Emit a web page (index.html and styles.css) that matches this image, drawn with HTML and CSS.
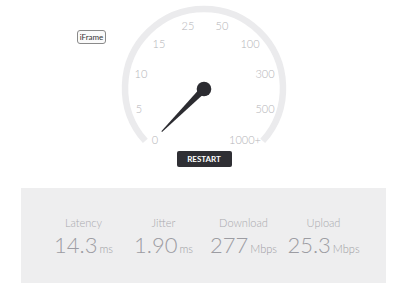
FILE: index.html
```
<!DOCTYPE html>
<html>
<head>
<meta charset="utf-8">
<link rel="stylesheet" href="styles.css">
</head>
<body>
<div class="top">
  <button class="iframe-btn">iFrame</button>
  <div class="gauge-wrap">
    <svg class="gauge" width="180" height="150" viewBox="0 0 180 150">
      <path class="arc" d="M31.3 140.9 A79 79 0 1 1 148.7 140.9"/>
      <g class="ticks">
        <text x="41" y="139">0</text>
        <text x="25" y="108">5</text>
        <text x="27" y="73">10</text>
        <text x="45" y="43">15</text>
        <text x="74" y="25">25</text>
        <text x="108" y="25">50</text>
        <text x="136" y="43">100</text>
        <text x="151" y="73">300</text>
        <text x="151" y="108">500</text>
        <text x="131" y="139">1000+</text>
      </g>
      <polygon class="needle" points="87.6,86.6 92.4,91.4 48.05,132.05 47.35,131.35"/>
      <circle class="needle" cx="90" cy="89" r="7.3"/>
    </svg>
    <button class="restart">RESTART</button>
  </div>
</div>
<div class="panel">
  <div class="stat"><div class="label">Latency</div><div class="value">14.3<span class="unit">ms</span></div></div>
  <div class="stat"><div class="label">Jitter</div><div class="value">1.90<span class="unit">ms</span></div></div>
  <div class="stat"><div class="label">Download</div><div class="value">277<span class="unit">Mbps</span></div></div>
  <div class="stat"><div class="label">Upload</div><div class="value">25.3<span class="unit">Mbps</span></div></div>
</div>
</body>
</html>
```
FILE: styles.css
```
html, body {
  margin: 0;
  padding: 0;
  background: #ffffff;
  font-family: Lato, "Open Sans", sans-serif;
}
.top {
  display: flex;
  align-items: flex-start;
  padding-left: 77px;
}
.iframe-btn {
  margin-top: 30px;
  width: 29px;
  height: 14px;
  padding: 0;
  font-family: Lato, sans-serif;
  font-size: 8px;
  color: #333;
  background: #fafafa;
  border: 1px solid #8a8a8a;
  border-radius: 3px;
  line-height: 12px;
  text-align: center;
  white-space: nowrap;
}
.gauge-wrap {
  margin-left: 8px;
  width: 180px;
  display: flex;
  flex-direction: column;
  align-items: center;
}
.gauge {
  display: block;
}
.arc {
  fill: none;
  stroke: #ebebed;
  stroke-width: 6.5;
}
.ticks text {
  font-family: Lato, sans-serif;
  font-size: 11px;
  font-weight: 300;
  fill: #b4b4b8;
  text-anchor: middle;
  dominant-baseline: central;
}
.needle {
  fill: #2c2c31;
}
.restart {
  margin-top: 1px;
  width: 55px;
  height: 16px;
  padding: 0;
  border: none;
  border-radius: 2px;
  background: #2f2f34;
  color: #ffffff;
  font-family: Lato, sans-serif;
  font-weight: 700;
  font-size: 8px;
  line-height: 16px;
}
.panel {
  margin: 21px 0 0 21px;
  width: 365px;
  height: 95px;
  background: #eeeeef;
  display: flex;
  justify-content: center;
  box-sizing: border-box;
  padding-top: 28px;
}
.stat {
  width: 80px;
  text-align: center;
}
.label {
  font-size: 11px;
  font-weight: 300;
  color: #a9a9ae;
  line-height: 14px;
}
.value {
  margin-top: 2px;
  font-size: 22px;
  font-weight: 300;
  color: #9c9ca2;
  line-height: 26px;
  white-space: nowrap;
}
.unit {
  font-size: 11px;
  margin-left: 2px;
}
```
